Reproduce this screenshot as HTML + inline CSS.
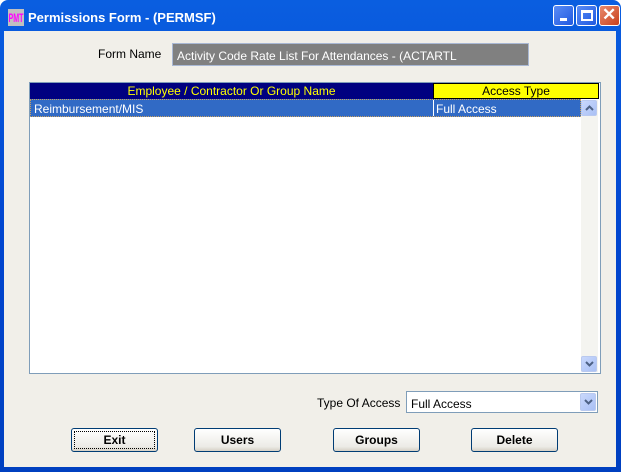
<!DOCTYPE html>
<html><head><style>
*{margin:0;padding:0;box-sizing:border-box}
body{width:625px;height:472px;background:#fff;position:relative;overflow:hidden;font-family:"Liberation Sans",sans-serif;font-size:12px;color:#000}
.win{position:absolute;left:0;top:0;width:621px;height:472px;background:linear-gradient(#0a5ee0,#0246d0 50%,#0040c0);border-radius:8px 8px 0 0}
.title{position:absolute;left:8px;top:7px;height:20px;color:#fff;font-weight:bold;font-size:13px;display:flex;align-items:center}
.ico{width:16px;height:17px;margin-right:4px;display:block}
.client{position:absolute;left:4px;top:31px;width:612px;height:436px;background:#f1efe9}
.tb{position:absolute;top:5px;width:21px;height:21px;border:1px solid #fff;border-radius:3px;background:linear-gradient(135deg,#5a8cf5,#2059e0)}
.abs{position:absolute}
.btn{position:absolute;top:428px;width:87px;height:24px;border:1px solid #003c74;border-radius:3px;background:linear-gradient(#fff,#ecebe6 80%,#d6d0c5);font-weight:bold;font-size:12px;text-align:center;line-height:22px}
.sb{position:absolute;width:16px;height:16px;border:1px solid #b9c9ef;border-radius:2px;background:linear-gradient(135deg,#c9d8fc,#a9c0f5)}
.sb svg{position:absolute;left:3px;top:4px}
</style></head><body>
<div class="win">
<div class="title"><svg class="ico" width="16" height="17"><rect width="16" height="17" fill="#c0c0c0"/><text x="0.5" y="13" font-family="Liberation Sans" font-size="12" fill="#f0f" textLength="15" lengthAdjust="spacingAndGlyphs">PMT</text></svg>Permissions Form - (PERMSF)</div>
<div class="tb" style="left:553px"><div class="abs" style="left:6px;top:12px;width:7px;height:3px;background:#fff"></div></div>
<div class="tb" style="left:576px"><div class="abs" style="left:4px;top:4px;width:12px;height:11px;border:2px solid #fff;border-top-width:3px"></div></div>
<div class="tb" style="left:599px;background:linear-gradient(135deg,#e88a6c,#c9411e)"><div class="abs" style="left:2px;top:-1px;color:#fff;font-weight:bold;font-size:17px">✕</div></div>
</div>
<div class="client"></div>
<div class="abs" style="left:98px;top:47px">Form Name</div>
<div class="abs" style="left:172px;top:43px;width:357px;height:23px;background:#808080;border:1px solid #a9b8d4;color:#fff;padding:5px 4px">Activity Code Rate List For Attendances - (ACTARTL</div>
<div class="abs" style="left:29px;top:82px;width:572px;height:292px;border:1px solid #7f9db9;background:#fff"></div>
<div class="abs" style="left:30px;top:83px;width:403px;height:16px;background:#000080;color:#ff0;text-align:center;line-height:16px">Employee / Contractor Or Group Name</div>
<div class="abs" style="left:433px;top:83px;width:166px;height:16px;background:#ff0;border:1px solid #000;text-align:center;line-height:14px">Access Type</div>
<div class="abs" style="left:30px;top:99px;width:551px;height:18px;background:#316ac5;color:#fff;line-height:17px;padding-left:3px;border:1px dotted #c8a060"><span style="position:relative;top:1px">Reimbursement/MIS</span></div>
<div class="abs" style="left:433px;top:100px;width:1px;height:16px;background:#fff"></div>
<div class="abs" style="left:436px;top:100px;color:#fff;line-height:18px">Full Access</div>
<div class="abs" style="left:581px;top:100px;width:17px;height:272px;background:#f4f4f0"></div>
<div class="sb" style="left:581px;top:100px"><svg width="9" height="6"><path d="M1 5L4.5 1.5L8 5" stroke="#4d6185" stroke-width="2" fill="none"/></svg></div>
<div class="sb" style="left:581px;top:356px"><svg width="9" height="6"><path d="M1 1L4.5 4.5L8 1" stroke="#4d6185" stroke-width="2" fill="none"/></svg></div>
<div class="abs" style="left:317px;top:396px">Type Of Access</div>
<div class="abs" style="left:406px;top:391px;width:192px;height:22px;border:1px solid #7f9db9;background:#fff;padding:5px 4px">Full Access</div>
<div class="sb" style="left:580px;top:393px;height:18px"><svg width="9" height="6" style="top:5px"><path d="M1 1L4.5 4.5L8 1" stroke="#4d6185" stroke-width="2" fill="none"/></svg></div>
<div class="btn" style="left:71px"><div style="position:absolute;left:2px;top:2px;right:2px;bottom:2px;border:1px dotted #000"></div>Exit</div>
<div class="btn" style="left:194px">Users</div>
<div class="btn" style="left:333px">Groups</div>
<div class="btn" style="left:471px">Delete</div>
</body></html>
